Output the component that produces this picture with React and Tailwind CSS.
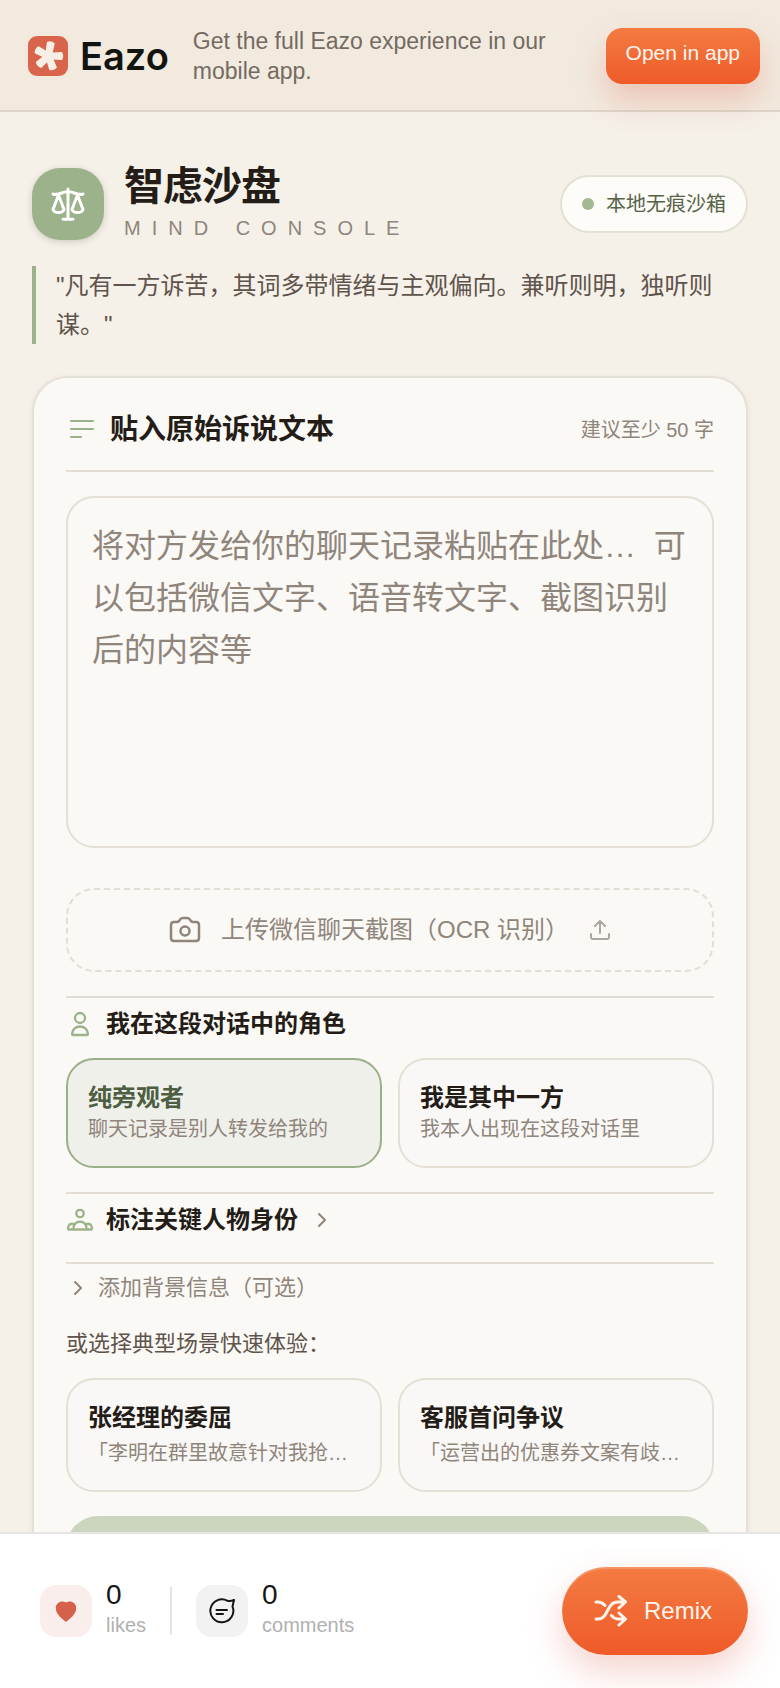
import React, { useState } from 'react';

const roles = [
  { id: 'observer', title: '纯旁观者', note: '聊天记录是别人转发给我的' },
  { id: 'party', title: '我是其中一方', note: '我本人出现在这段对话里' },
];

const scenes = [
  { title: '张经理的委屈', note: '「李明在群里故意针对我抢…' },
  { title: '客服首问争议', note: '「运营出的优惠券文案有歧…' },
];

function Icon({ className, box = '0 0 24 24', width = 2, children }) {
  return (
    <svg className={className} viewBox={box} fill="none" stroke="currentColor" strokeWidth={width} strokeLinecap="round" strokeLinejoin="round" aria-hidden="true">
      {children}
    </svg>
  );
}

function EazoMark() {
  return (
    <svg className="size-10 shrink-0" viewBox="0 0 40 40" aria-hidden="true">
      <rect width="40" height="40" rx="9" fill="#d9644c" />
      <g fill="#f7efe6" stroke="#f7efe6" strokeWidth="2" strokeLinejoin="round">
        {[0, 70, 138, 208, 280].map(angle => (
          <path key={angle} d="M0-2.300 13-3Q14.500 0 13 3L0 2.300Z" transform={`translate(20.5 20) rotate(${angle})`} />
        ))}
      </g>
    </svg>
  );
}

function AppBanner() {
  return (
    <header className="relative z-10 flex shrink-0 items-center border-b-2 border-[#ddd5c9] bg-[#f2eadf] pt-[26px] pr-5 pb-6 pl-7">
      <div className="flex items-center gap-3">
        <EazoMark />
        <span className="font-[Inter,sans-serif] text-[38px] leading-10 font-semibold text-[#12140f]">Eazo</span>
      </div>
      <p className="ml-6 flex-1 text-[23px] leading-[30px] text-[#736b62]">
        Get the full Eazo experience in our mobile app.
      </p>
      <button className="ml-10 h-14 shrink-0 rounded-2xl bg-linear-to-b from-[#f47b42] to-[#ee5a28] px-5 pb-1.5 text-[21px] leading-7 text-[#fff6ee] shadow-[0_16px_32px_rgba(217,84,62,0.26)]">
        Open in app
      </button>
    </header>
  );
}

function Choice({ title, note, selected, onClick, gap }) {
  return (
    <button
      onClick={onClick}
      aria-pressed={selected}
      className={`flex min-w-0 flex-col rounded-[28px] border-2 px-5 py-[22px] text-left ${gap} ${selected ? 'border-[#9bb088] bg-[#f0f0eb]' : 'border-[#e5dfd5] bg-[#faf8f6]'}`}
    >
      <span className={`text-2xl leading-8 font-bold ${selected ? 'text-[#4d5e42]' : 'text-[#231c17]'}`}>{title}</span>
      <span className="text-xl leading-[30px] text-[#8f857b]">{note}</span>
    </button>
  );
}

function BottomBar() {
  return (
    <footer className="relative z-10 flex h-[156px] shrink-0 items-center justify-between border-t-2 border-[#e7e5e3] bg-white px-8">
      <div className="flex items-center pl-2">
        <button className="flex items-center gap-3.5 text-left">
          <span className="flex size-[52px] items-center justify-center rounded-2xl bg-[#faeeec]">
            <svg className="size-6" viewBox="0 0 24 24" fill="#d6614a" aria-hidden="true">
              <path d="M12 23C8 19.500 1.800 15.500 1.800 9 1.800 3.500 7.500 1 12 3.500 16.500 1 22.200 3.500 22.200 9 22.200 15.500 16 19.500 12 23Z" />
            </svg>
          </span>
          <span className="pb-1">
            <span className="block text-[28px] leading-8 text-[#161616]">0</span>
            <span className="block text-xl leading-7 text-[#b0b0b0]">likes</span>
          </span>
        </button>
        <div className="mx-6 h-12 w-0.5 bg-[#e5e5e5]" />
        <button className="flex items-center gap-3.5 text-left">
          <span className="flex size-[52px] items-center justify-center rounded-2xl bg-[#f2f2f2] text-[#151515]">
            <Icon className="size-7" box="0 0 28 28">
              <path d="M19.500 3.800A11.500 11.500 0 1 0 24.500 9.500L26 3Q22.500 4.500 19.500 3.800Z" />
              <path d="M8.500 13H19M8.500 17H15" />
            </Icon>
          </span>
          <span className="pb-1">
            <span className="block text-[28px] leading-8 text-[#161616]">0</span>
            <span className="block text-xl leading-7 text-[#b0b0b0]">comments</span>
          </span>
        </button>
      </div>
      <button className="flex h-[88px] items-center gap-4 rounded-full bg-linear-to-b from-[#f47b42] to-[#ee5a28] pr-9 pl-8 text-2xl text-[#fff6ee] shadow-[inset_0_2px_0_rgba(255,255,255,0.18),0_16px_36px_rgba(217,84,62,0.26)]">
        <Icon className="h-8 w-[34px]" box="0 0 34 32" width={3}>
          <path d="M2 7H4Q8 7 11 10.500M2 24H4C15 24 12 7 24 7H31M25 1.500 31.500 7 25 13M17.500 20.500Q20 24 24 24H31M25 18 31.500 24 25 30" />
        </Icon>
        Remix
      </button>
    </footer>
  );
}

export default function App() {
  const [role, setRole] = useState('observer');
  const [text, setText] = useState('');

  return (
    <div className="flex h-screen flex-col bg-[#f5f0e8] font-['Liberation_Sans','Noto_Sans_CJK_SC',sans-serif]">
      <AppBanner />

      <main className="min-h-0 flex-1 overflow-y-auto px-8 pt-[54px] [scrollbar-width:none]">
        <div className="flex items-center justify-between">
          <div className="flex items-center gap-5">
            <div className="flex size-[72px] items-center justify-center rounded-[28px] bg-[#9bb28a] text-white shadow-[0_2px_6px_rgba(90,110,70,0.25)]">
              <Icon className="size-[34px]" box="0 0 34 34" width={3}>
                <path d="M17 2V32M12 32.300H22M2 7C7 9 12 4.500 17 4.500S27 9 32 7" />
                <path d="M7.500 8 2 22.500C3 26.500 12 26.500 13 22.500ZM26.500 8 21 22.500C22 26.500 31 26.500 32 22.500Z" />
              </Icon>
            </div>
            <div className="flex flex-col gap-2">
              <h1 className="text-[40px] leading-10 font-bold tracking-tight text-[#231c17]">智虑沙盘</h1>
              <p className="text-xl leading-7 tracking-[11px] text-[#8f857b]">MIND CONSOLE</p>
            </div>
          </div>
          <div className="flex items-center gap-3 rounded-full border-2 border-[#e5e0d5] bg-[#fdfcf8] px-5 py-3">
            <span className="size-3 rounded-full bg-[#a5b895]" />
            <span className="text-xl leading-[30px] text-[#566349]">本地无痕沙箱</span>
          </div>
        </div>

        <blockquote className="mt-6 border-l-4 border-[#9bb28a] pl-5 text-2xl leading-[39px] text-[#5f544c]">
          "凡有一方诉苦，其词多带情绪与主观偏向。兼听则明，独听则谋。"
        </blockquote>

        <section className="mt-8 rounded-[36px] border-2 border-[#e5e0d5] bg-[#fbf9f5] px-8 pt-8 pb-8 shadow-[0_2px_6px_rgba(120,100,70,0.08)]">
          <div className="flex items-center justify-between border-b-2 border-[#e3ddd3] pb-5">
            <h2 className="flex items-center gap-3.5 text-[28px] leading-10 font-bold text-[#231c17]">
              <Icon className="size-[30px] text-[#9bb28a]" box="0 0 30 30">
                <path d="M5 6H27M5 14H27M5 22H15" />
              </Icon>
              <label htmlFor="story">贴入原始诉说文本</label>
            </h2>
            <span className="text-xl leading-7 text-[#8f857b]">建议至少 50 字</span>
          </div>

          <textarea
            id="story"
            value={text}
            onChange={e => setText(e.target.value)}
            placeholder="将对方发给你的聊天记录粘贴在此处…  可以包括微信文字、语音转文字、截图识别后的内容等"
            className="mt-6 block h-[352px] w-full resize-none rounded-[28px] border-2 border-[#e5dfd5] bg-[#fbf9f6] px-6 py-[22px] text-[32px] leading-[52px] text-[#231c17] placeholder:text-[#8f857b]"
          />

          <button className="mt-10 flex h-[84px] w-full items-center justify-center gap-5 rounded-[28px] border-2 border-dashed border-[#e2ddd5] text-2xl text-[#8f857b]">
            <Icon className="size-8" box="0 0 32 32" width={2.5}>
              <path d="M5 8H8Q9 8 10 7L12 4.500Q13 4 14 4H18Q19 4 20 4.500L22 7Q23 8 24 8H27Q30 8 30 11V24Q30 27 27 27H5Q2 27 2 24V11Q2 8 5 8Z" />
              <circle cx="16" cy="17" r="4.500" />
            </Icon>
            上传微信聊天截图（OCR 识别）
            <Icon className="size-[22px] opacity-70" box="0 0 22 22">
              <path d="M2 15V18Q2 20 4 20H18Q20 20 20 18V15M11 14V2M6 7 11 2 16 7" />
            </Icon>
          </button>

          <div className="mt-6 border-t-2 border-[#e3ddd3] pt-2">
            <h3 className="flex items-center gap-3 text-2xl leading-9 font-bold text-[#231c17]">
              <Icon className="size-7 text-[#9bb28a]" box="0 0 28 28" width={2.3}>
                <circle cx="14" cy="8" r="5" />
                <path d="M6 24C6.500 14 21.500 14 22 24Q22 25 21 25H7Q6 25 6 24Z" />
              </Icon>
              我在这段对话中的角色
            </h3>
            <div className="mt-4 grid grid-cols-2 gap-4">
              {roles.map(item => (
                <Choice key={item.id} title={item.title} note={item.note} selected={role === item.id} onClick={() => setRole(item.id)} gap="gap-0" />
              ))}
            </div>
          </div>

          <div className="mt-6 border-t-2 border-[#e3ddd3] pt-2 pb-6">
            <button className="flex items-center gap-3 text-2xl leading-9 font-bold text-[#231c17]">
              <Icon className="size-7 text-[#9bb28a]" box="0 0 28 28" width={2.3}>
                <circle cx="14" cy="7.500" r="3.700" />
                <path d="M7.500 23.500C6.500 13 21.500 13 20.500 23.500M8 18C4 17 2 19 2 22.500Q2 23.500 3 23.500H25Q26 23.500 26 22.500C26 19 24 17 20 18" />
              </Icon>
              标注关键人物身份
              <Icon className="size-6 text-[#8f857b]">
                <path d="M9 6 15 12 9 18" />
              </Icon>
            </button>
          </div>

          <button className="flex w-full items-center gap-2 border-t-2 border-[#e3ddd3] pt-2 text-[22px] leading-8 text-[#8f857b]">
            <Icon className="size-6">
              <path d="M9 6 15 12 9 18" />
            </Icon>
            添加背景信息（可选）
          </button>

          <p className="mt-6 text-[22px] leading-8 text-[#5f544c]">或选择典型场景快速体验：</p>
          <div className="mt-[18px] grid grid-cols-2 gap-4">
            {scenes.map(item => (
              <Choice key={item.title} title={item.title} note={item.note} gap="gap-1" />
            ))}
          </div>

          <button aria-label="开始分析" disabled className="mt-6 block h-24 w-full rounded-[32px] bg-[#ccd6be]" />
        </section>
      </main>

      <BottomBar />
    </div>
  );
}
